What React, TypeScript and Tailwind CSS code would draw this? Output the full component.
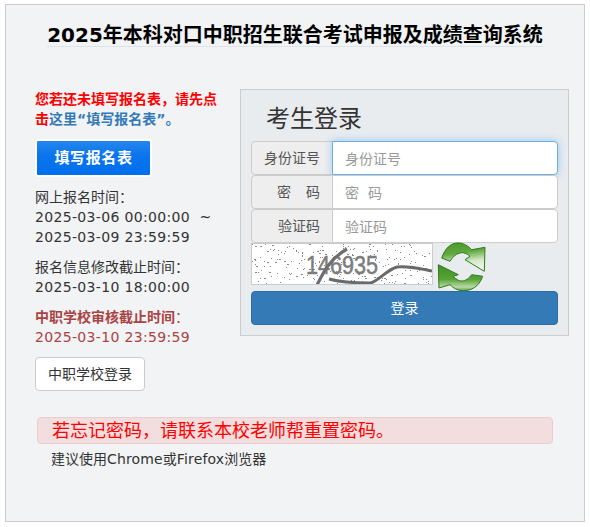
const dots = (() => {
  // fixed speckle for the captcha picture
  let s = 11
  const r = () => {
    s = (s * 16807) % 2147483647
    return s / 2147483647
  }
  const out: { x: number; y: number; w: number }[] = []
  for (let i = 0; i < 240; i++) {
    out.push({ x: Math.floor(r() * 180), y: Math.floor(r() * 40), w: r() > 0.8 ? 2 : 1 })
  }
  return out
})()

function Captcha() {
  return (
    <svg width="180" height="40" viewBox="0 0 180 40" className="block bg-white border border-[#ccc] box-content">
      {dots.map((d, i) => (
        <rect key={i} x={d.x} y={d.y} width={d.w} height="1" fill="#8a8a8a" />
      ))}
      <text x="54" y="30" fontFamily="Liberation Sans" fontSize="25" fill="#7c7c7c" stroke="#7c7c7c" strokeWidth="0.5" textLength="72" lengthAdjust="spacingAndGlyphs">
        146935
      </text>
      <path d="M65 41 C72 27 78 15 95 5" fill="none" stroke="#6e6e6e" strokeWidth="3.2" />
      <path d="M77 35 C88 38 98 39 118 39 C126 38 134 26 145 23 C155 22 165 24 180 27" fill="none" stroke="#6a6a6a" strokeWidth="3" />
    </svg>
  )
}

function RefreshIcon() {
  return (
    <svg width="50" height="50" viewBox="0 0 50 50" className="block shrink-0 -mt-[2px]">
      <defs>
        <linearGradient id="up" gradientUnits="userSpaceOnUse" x1="20" y1="2" x2="24" y2="30">
          <stop offset="0" stopColor="#4c9a2c" />
          <stop offset="0.35" stopColor="#5fa83e" />
          <stop offset="0.7" stopColor="#d4e9c8" />
          <stop offset="1" stopColor="#f0f8ea" />
        </linearGradient>
        <linearGradient id="down" gradientUnits="userSpaceOnUse" x1="24" y1="24" x2="24" y2="50">
          <stop offset="0" stopColor="#3f8f25" />
          <stop offset="0.55" stopColor="#58a436" />
          <stop offset="0.85" stopColor="#b9dba8" />
          <stop offset="1" stopColor="#4c9a2c" />
        </linearGradient>
      </defs>
      <path
        d="M4.7 17C8 7 14 2 21 2C27 2 31 5 34.7 8.7L48 6.3L47.3 30.3L28 18.7L33 15.3C30 12.5 26 11 23 12C18 13 15 17 13 20.3Z"
        fill="url(#up)"
        stroke="#2f7a1e"
      />
      <path
        d="M45.7 35.3C42 46 34 49.7 26.3 49.7C20 49.7 16 46.5 13 43.7L2 47L1.3 23.7L21.3 33.7L16.3 35.3C19 38.5 22 40 24.7 40C29 40 32 37 34.7 33.7Z"
        fill="url(#down)"
        stroke="#2f7a1e"
      />
    </svg>
  )
}

function Field({ label, holder, focus }: { label: React.ReactNode; holder: string; focus?: boolean }) {
  return (
    <div className="flex h-[34px]">
      <span className="flex w-[82px] items-center justify-end rounded-l border border-[#ccc] bg-[#eee] pr-[12px] text-[14px] text-[#555]">
        {label}
      </span>
      <input
        readOnly
        placeholder={holder}
        className={
          focus
            ? 'flex-1 min-w-0 -ml-px rounded-r border border-[#66afe9] bg-white px-3 pt-[2px] text-[14px] outline-none shadow-[0_0_8px_rgba(102,175,233,0.6)] placeholder:text-[#999]'
            : 'flex-1 min-w-0 -ml-px rounded-r border border-[#ccc] bg-white px-3 pt-[2px] text-[14px] outline-none placeholder:text-[#999]'
        }
      />
    </div>
  )
}

export default function App() {
  return (
    <div className="h-[527px] w-[590px] bg-white px-[5px] pt-1 text-[14px] text-[#333] [font-family:'DejaVu_Sans','Noto_Sans_CJK_SC',sans-serif]">
      <div className="h-[518px] border border-[#ccc] bg-[#f2f3f5]">
        <div className="mx-[41px] mt-[16px] h-[26px] border-b border-[#dde3ea] text-center text-[20px] leading-[28px] font-bold text-black whitespace-nowrap">
          2025年本科对口中职招生联合考试申报及成绩查询系统
        </div>

        <div className="mt-[42px] flex pl-[29px]">
          <div className="w-[205px]">
            <p className="w-[190px] text-[14px] leading-[20px] font-bold text-[#f00]">
              您若还未填写报名表，请先点击<a className="text-[#337ab7]">这里“填写报名表”。</a>
            </p>
            <button className="mt-[10px] block h-[38px] w-[117px] rounded-[3px] border-2 border-white bg-[linear-gradient(#2587ee_0%,#0a74ec_45%,#0070ee_100%)] text-[15px] tracking-[0.6px] font-bold text-white">
              填写报名表
            </button>
            <div className="mt-[10px] leading-[20px]">
              <div>网上报名时间：</div>
              <div className="tracking-[0.33px]">2025-03-06 00:00:00&nbsp; ~</div>
              <div className="tracking-[0.33px]">2025-03-09 23:59:59</div>
            </div>
            <div className="mt-[10px] leading-[20px]">
              <div>报名信息修改截止时间：</div>
              <div className="tracking-[0.33px]">2025-03-10 18:00:00</div>
            </div>
            <div className="mt-[10px] leading-[20px] text-[#a94442]">
              <div><b>中职学校审核截止时间</b>：</div>
              <div className="tracking-[0.33px]">2025-03-10 23:59:59</div>
            </div>
            <button className="mt-[10px] block h-[34px] w-[110px] rounded border border-[#ccc] bg-white text-[14px] text-[#333]">
              中职学校登录
            </button>
          </div>

          <div className="h-[247px] w-[329px] border border-[#ccc] bg-[#e9ecef] px-[10px]">
            <div className="pl-[15px] pt-[14px] h-[51px] text-[24px] leading-[30px] text-[#333]">考生登录</div>
            <Field label="身份证号" holder="身份证号" focus />
            <Field label={<span className="flex gap-[15px]"><span>密</span><span>码</span></span>} holder="密  码" />
            <Field label="验证码" holder="验证码" />
            <div className="flex h-[48px] items-start gap-[4px]">
              <Captcha />
              <RefreshIcon />
            </div>
            <button className="block h-[34px] w-[307px] rounded border border-[#2e6da4] bg-[#337ab7] text-[14px] text-white">
              登录
            </button>
          </div>
        </div>

        <div className="mx-[31px] mt-[26px] h-[27px] rounded border border-[#ebccd1] bg-[#f2dede] pl-[14px] text-[18px] leading-[25px] text-[#f00]">
          若忘记密码，请联系本校老师帮重置密码。
        </div>
        <div className="mt-[3px] pl-[45px] text-[14px] leading-[24px]">
          建议使用<span className="tracking-[0.15px]">Chrome</span>或<span className="tracking-[0.15px]">Firefox</span>浏览器
        </div>
      </div>
    </div>
  )
}
